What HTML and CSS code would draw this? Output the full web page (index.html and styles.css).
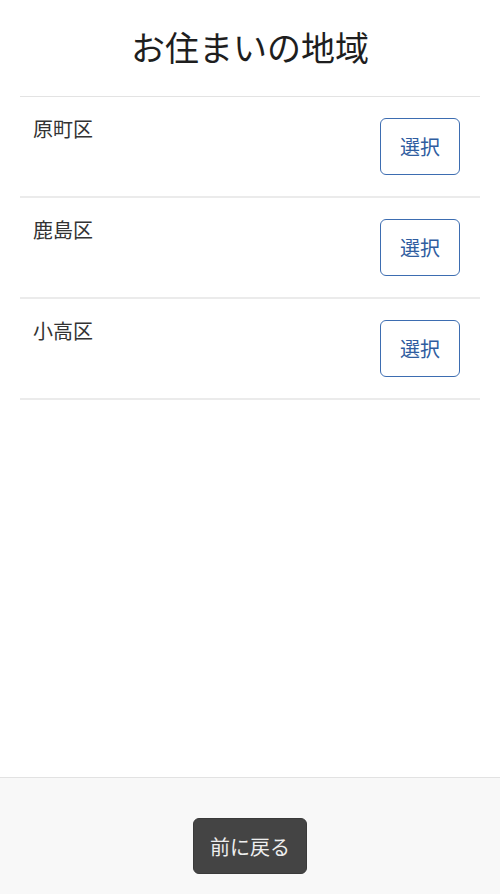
FILE: index.html
```html
<!DOCTYPE html>
<html lang="ja">
<head>
<meta charset="utf-8">
<title>お住まいの地域</title>
<link rel="stylesheet" href="styles.css">
</head>
<body>
<div class="page">
  <main class="main">
    <h1 class="title">お住まいの地域</h1>
    <ul class="list">
      <li class="row"><span class="name">原町区</span><button class="select">選択</button></li>
      <li class="row"><span class="name">鹿島区</span><button class="select">選択</button></li>
      <li class="row"><span class="name">小高区</span><button class="select">選択</button></li>
    </ul>
  </main>
  <footer class="footer">
    <button class="back">前に戻る</button>
  </footer>
</div>
</body>
</html>
```

FILE: styles.css
```css
html, body {
  margin: 0;
  padding: 0;
  background: #ffffff;
}
body {
  font-family: "Noto Sans CJK JP", "Noto Sans", sans-serif;
  color: #2b2b2b;
}
.page {
  display: flex;
  flex-direction: column;
  height: 894px;
}
.main {
  flex: 1;
}
.title {
  margin: 21px 0 24px;
  font-size: 34px;
  line-height: 51px;
  font-weight: 400;
  text-align: center;
  color: #1e1e1e;
}
.list {
  list-style: none;
  margin: 0 20px;
  padding: 0;
  border-top: 1px solid #e3e3e3;
}
.row {
  display: flex;
  justify-content: space-between;
  align-items: flex-start;
  padding: 21px 20px 21px 13px;
  border-bottom: 2px solid #ebebeb;
}
.name {
  font-size: 20px;
  line-height: 22px;
  color: #333;
}
.select {
  box-sizing: border-box;
  width: 80px;
  height: 57px;
  border: 1.5px solid #3d6db1;
  border-radius: 6px;
  background: #fff;
  color: #2f5d9f;
  font-family: inherit;
  font-size: 20px;
  padding: 0;
}
.footer {
  height: 117px;
  border-top: 1px solid #e2e2e2;
  background: #f8f8f8;
  display: flex;
  justify-content: center;
  align-items: flex-start;
  padding-top: 40px;
  box-sizing: border-box;
}
.back {
  width: 114px;
  height: 56px;
  border: 1px solid #3a3a3a;
  border-radius: 6px;
  background: #444444;
  color: #eeeeee;
  font-family: inherit;
  font-size: 20px;
  padding: 0;
}
```
